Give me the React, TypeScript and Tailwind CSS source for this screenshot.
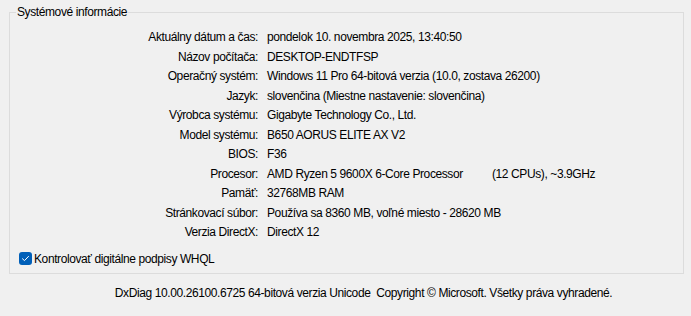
import React from 'react';

const rows: { label: string; value: React.ReactNode }[] = [
  { label: 'Aktuálny dátum a čas:', value: 'pondelok 10. novembra 2025, 13:40:50' },
  { label: 'Názov počítača:', value: 'DESKTOP-ENDTFSP' },
  { label: 'Operačný systém:', value: 'Windows 11 Pro 64-bitová verzia (10.0, zostava 26200)' },
  { label: 'Jazyk:', value: 'slovenčina (Miestne nastavenie: slovenčina)' },
  { label: 'Výrobca systému:', value: 'Gigabyte Technology Co., Ltd.' },
  { label: 'Model systému:', value: 'B650 AORUS ELITE AX V2' },
  { label: 'BIOS:', value: 'F36' },
  {
    label: 'Procesor:',
    value: (
      <span className="flex">
        <span className="w-[225px]">AMD Ryzen 5 9600X 6-Core Processor</span>
        <span>(12 CPUs), ~3.9GHz</span>
      </span>
    )
  },
  { label: 'Pamäť:', value: '32768MB RAM' },
  { label: 'Stránkovací súbor:', value: 'Používa sa 8360 MB, voľné miesto - 28620 MB' },
  { label: 'Verzia DirectX:', value: 'DirectX 12' }
];

const App: React.FC = () => {
  return (
    <div className="w-[691px] h-[316px] bg-[#f0f0f0] text-black text-[12px] tracking-[-0.4px] font-['Liberation_Sans',Arial,sans-serif] pt-[4px] overflow-hidden">
      <fieldset className="ml-[9px] w-[675px] h-[270px] border border-[#dcdcdc] px-0">
        <legend className="ml-[6px] px-[1px] leading-[16px]">Systémové informácie</legend>

        <div className="grid grid-cols-[248px_1fr] gap-x-[9px] mt-[8px]">
          {rows.map((row, i) => (
            <React.Fragment key={i}>
              <div className="text-right leading-[19.5px] whitespace-nowrap">{row.label}</div>
              <div className="leading-[19.5px] whitespace-nowrap">{row.value}</div>
            </React.Fragment>
          ))}
        </div>

        <label className="flex items-center gap-[2px] ml-[9px] mt-[8px] leading-[16px]">
          <span className="w-[13px] h-[13px] rounded-[3px] bg-[#005fb8] flex items-center justify-center">
            <svg width="9" height="9" viewBox="0 0 9 9" fill="none">
              <path d="M1.5 4.8 L3.5 6.6 L7.5 2.4" stroke="white" strokeWidth="1" strokeLinecap="round" strokeLinejoin="round" />
            </svg>
          </span>
          Kontrolovať digitálne podpisy WHQL
        </label>
      </fieldset>

      <p className="text-center leading-[16px] mt-[11px] pl-[36px]">
        DxDiag 10.00.26100.6725 64-bitová verzia Unicode&nbsp;&nbsp;Copyright © Microsoft. Všetky práva vyhradené.
      </p>
    </div>
  );
};

export default App;
